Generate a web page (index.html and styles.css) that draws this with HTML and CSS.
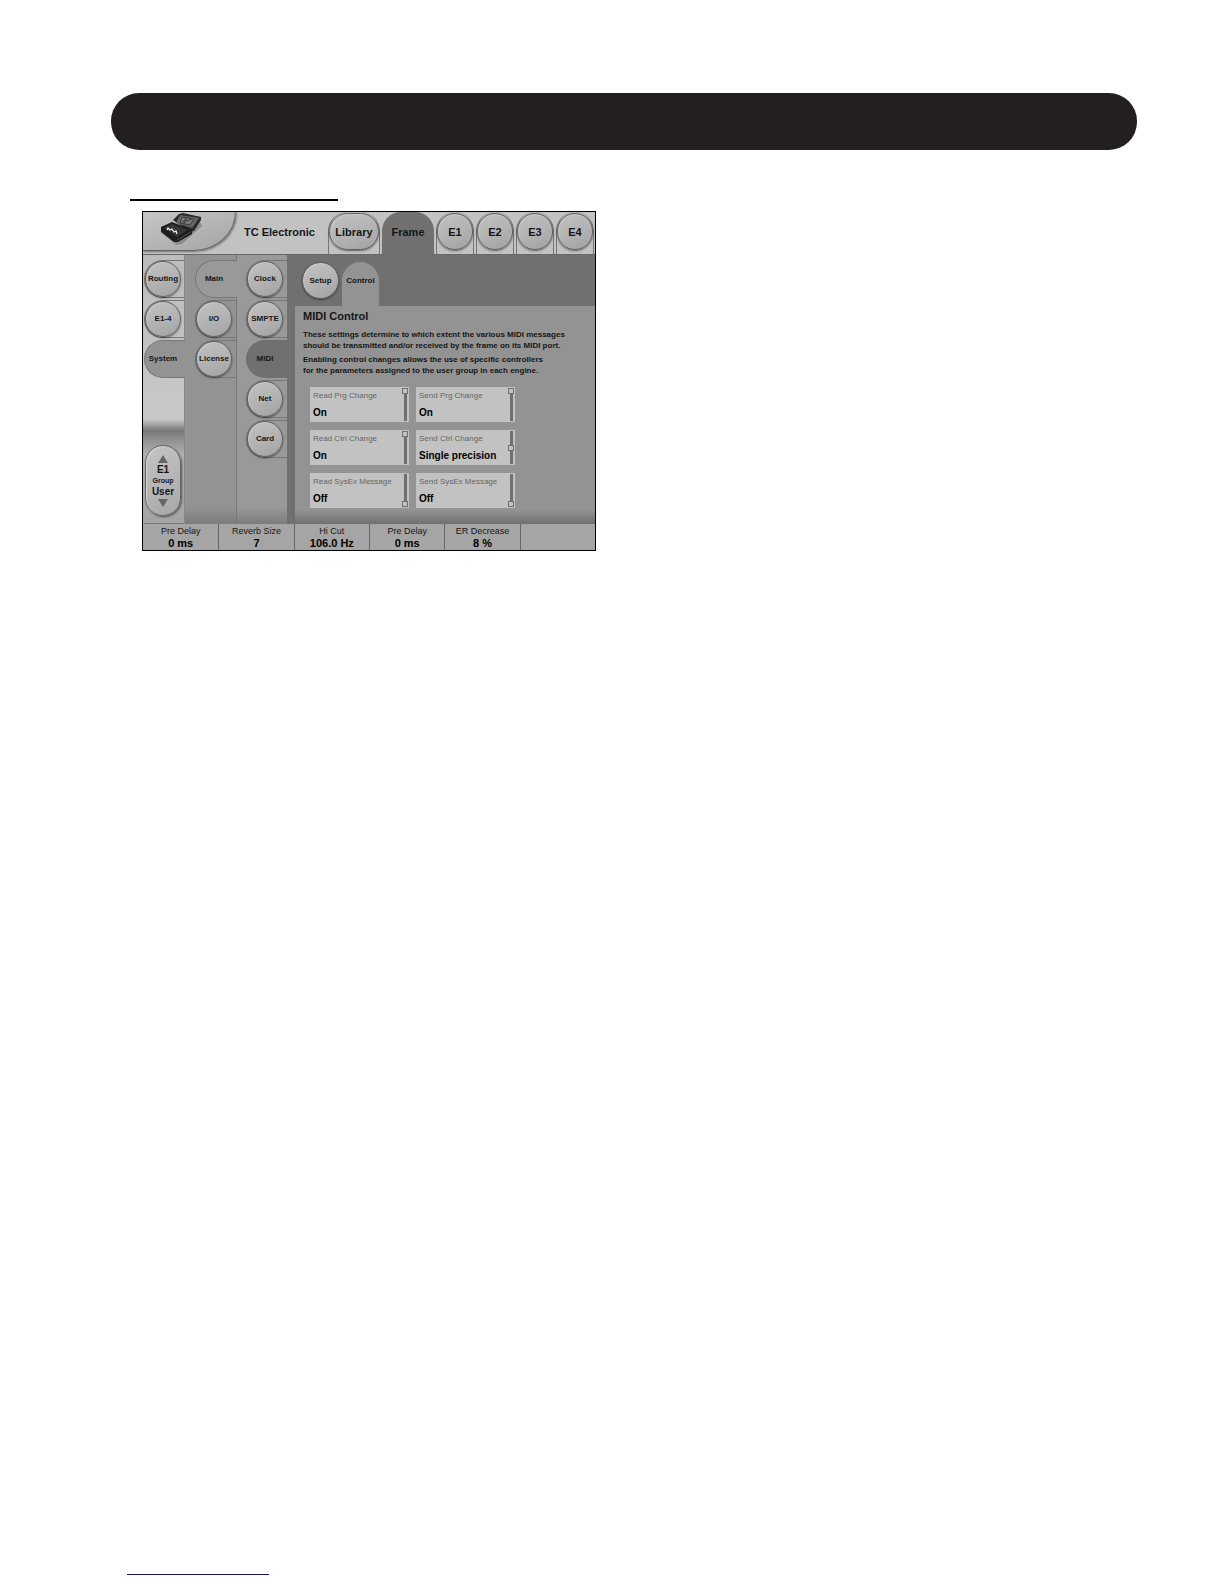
FILE: index.html
```
<!DOCTYPE html>
<html lang="en">
<head>
  <meta charset="UTF-8" />
  <meta name="viewport" content="width=device-width, initial-scale=1.0"/>
  <title>MIDI Control</title>
  <link rel="stylesheet" href="styles.css">
</head>
<body>
  <header class="banner"></header>

  <main class="page">
    <hr class="section-rule">

    <div class="device">
      <!-- Top bar -->
      <nav class="topbar">
        <div class="logo">
          <svg width="46" height="36" viewBox="0 0 46 36" aria-hidden="true">
            <path d="M1 20 L16 33 L22 32 L42 14 L40 10 L18 28 Z" fill="#666" opacity=".5"/>
            <path d="M13 8 L19 2 L23 1 L41 5 L41 8 L34 19 L30 20 Z" fill="#2a2a2a"/>
            <path d="M20 3 L39 6 L32 16 L16 11 Z" fill="#666"/>
            <path d="M22 5 L34 7 L30 13 L20 11 Z M26 5 L24 12 M32 7 L22 10" stroke="#3c3c3c" stroke-width="1" fill="#7a7a7a"/>
            <path d="M1 15 L12 10 L32 18 L32 22 L18 30 L14 30 L1 20 Z" fill="#1d1d1d"/>
            <path d="M4 16 L12 12 L28 18 L17 25 Z" fill="#353535"/>
            <path d="M7 18 L8 16 L10 18 L12 17 L14 20 L16 19 L17 22" stroke="#e8e8e8" stroke-width="1.3" fill="none"/>
            <path d="M17 28 L31 20" stroke="#555" stroke-width="1"/>
          </svg>
        </div>
        <h1 class="brand">TC Electronic</h1>
        <ul class="tabs">
          <li class="wide"><button class="knob">Library</button></li>
          <li class="wide active"><button>Frame</button></li>
          <li><button class="knob">E1</button></li>
          <li><button class="knob">E2</button></li>
          <li><button class="knob">E3</button></li>
          <li><button class="knob">E4</button></li>
        </ul>
      </nav>

      <div class="workspace">
        <div class="rail rail-first">
          <ul>
            <li><button class="knob">Routing</button></li>
            <li><button class="knob">E1-4</button></li>
            <li class="active"><button>System</button></li>
          </ul>
          <div class="group">
            <div class="group-pill">
              <button aria-label="Previous group"><svg width="10" height="8" viewBox="0 0 10 8"><path d="M5 0 L10 8 L0 8 Z" fill="#666"/></svg></button>
              <strong>E1</strong>
              <span>Group</span>
              <strong>User</strong>
              <button aria-label="Next group"><svg width="10" height="8" viewBox="0 0 10 8"><path d="M0 0 L10 0 L5 8 Z" fill="#666"/></svg></button>
            </div>
          </div>
        </div>

        <div class="rail rail-second">
          <ul>
            <li class="active"><button>Main</button></li>
            <li><button class="knob">I/O</button></li>
            <li><button class="knob">License</button></li>
          </ul>
        </div>

        <div class="rail rail-third">
          <ul>
            <li><button class="knob">Clock</button></li>
            <li><button class="knob">SMPTE</button></li>
            <li class="active"><button>MIDI</button></li>
            <li><button class="knob">Net</button></li>
            <li><button class="knob">Card</button></li>
          </ul>
        </div>

        <section class="panel">
          <div class="subtabs">
            <button class="knob">Setup</button>
            <button class="current">Control</button>
          </div>
          <div class="content">
            <h2>MIDI Control</h2>
            <p>These settings determine to which extent the various MIDI messages<br>should be transmitted and/or received by the frame on its MIDI port.</p>
            <p>Enabling control changes allows the use of specific controllers<br>for the parameters assigned to the user group in each engine.</p>

            <div class="params">
              <button class="param"><span>Read Prg Change</span><b>On</b><i class="slider"></i></button>
              <button class="param"><span>Send Prg Change</span><b>On</b><i class="slider"></i></button>
              <button class="param"><span>Read Ctrl Change</span><b>On</b><i class="slider"></i></button>
              <button class="param"><span>Send Ctrl Change</span><b>Single precision</b><i class="slider mid"></i></button>
              <button class="param"><span>Read SysEx Message</span><b>Off</b><i class="slider low"></i></button>
              <button class="param"><span>Send SysEx Message</span><b>Off</b><i class="slider low"></i></button>
            </div>
          </div>
        </section>
      </div>

      <!-- Fader assignments -->
      <dl class="faders">
        <div><dt>Pre Delay</dt><dd>0 ms</dd></div>
        <div><dt>Reverb Size</dt><dd>7</dd></div>
        <div><dt>Hi Cut</dt><dd>106.0 Hz</dd></div>
        <div><dt>Pre Delay</dt><dd>0 ms</dd></div>
        <div><dt>ER Decrease</dt><dd>8 %</dd></div>
        <div></div>
      </dl>
    </div>
  </main>

  <footer class="footer">
    <hr class="footer-rule">
  </footer>
</body>
</html>
```
FILE: styles.css
```
:root {
  --ink: #161616;
  --line: #686868;
  --light: #c2c2c2;
  --mid: #939393;
  --dark: #707070;
}
* {
  box-sizing: border-box;
  margin: 0;
  padding: 0;
}
body {
  display: flex;
  flex-direction: column;
  min-height: 100vh;
  background: #fff;
  color: var(--ink);
  font-family: "Liberation Sans", Arial, sans-serif;
}
ul {
  list-style: none;
}
button {
  background: none;
  border: none;
  color: inherit;
  font: bold 8px/10px "Liberation Sans", Arial, sans-serif;
  cursor: pointer;
}
svg {
  display: block;
}

.banner {
  height: 57px;
  margin: 93px 87px 0 111px;
  border-radius: 28px;
  background: #231f20;
}

.page {
  padding: 49px 87px 0 130px;
}

.section-rule {
  max-width: 208px;
  border: none;
  border-top: 2px solid #000;
}

.device {
  max-width: 454px;
  margin: 10px 0 0 12px;
  border: 1px solid #000;
  background: var(--mid);
}

.knob {
  width: 37px;
  height: 37px;
  border: 1px solid #606060;
  border-radius: 19px;
  background: linear-gradient(160deg, #c2c2c2, #b2b2b2 55%, #a2a2a2);
  box-shadow: 0 1px 2px rgba(0, 0, 0, 0.5), inset 1px 1px 1px #cacaca;
  white-space: nowrap;
}

/* Top bar */
.topbar {
  display: flex;
  height: 43px;
  background: var(--light);
  border-bottom: 1px solid var(--line);
}

.logo {
  width: 93px;
  height: 39px;
  padding-left: 17px;
  border: solid #666;
  border-width: 0 1px 1px 0;
  border-bottom-right-radius: 42px 39px;
  background: linear-gradient(160deg, #c6c6c6, #a4a4a4);
  box-shadow: 1px 1px 2px rgba(0, 0, 0, 0.4);
}

.brand {
  flex: 1;
  padding-left: 8px;
  font-size: 11px;
  line-height: 40px;
  white-space: nowrap;
}

.tabs {
  display: flex;
  gap: 2px;
  padding-right: 1px;
}

.tabs li {
  width: 38px;
  height: 42px;
  padding-top: 1px;
  border: solid #777;
  border-width: 0 1px;
  border-radius: 19px 19px 0 0;
}

.tabs li.wide {
  width: 52px;
}

.tabs button {
  width: 36px;
  height: 37px;
  font-size: 11px;
}

.tabs .wide button {
  width: 50px;
}

.tabs li.active {
  height: 43px;
  border-color: var(--dark);
  background: var(--dark);
}

/* Workspace */
.workspace {
  display: flex;
  min-height: 269px;
}

.rail {
  padding-top: 5px;
}

.rail li {
  height: 38px;
  margin-bottom: 2px;
  border: 1px solid #777;
  border-right: none;
  border-radius: 19px 0 0 19px;
}

.rail li button {
  width: 36px;
  height: 36px;
}

.rail-first {
  display: flex;
  flex-direction: column;
  justify-content: space-between;
  width: 42px;
  padding-left: 1px;
  border-right: 1px solid #888;
  background: linear-gradient(#bcbcbc, #c8c8c8 164px, #777 176px, #8a8a8a 182px, #b0b0b0 200px, #a4a4a4);
}

.rail-first .active {
  margin-right: -1px;
  background: var(--mid);
}

.rail-second {
  width: 52px;
  padding-left: 10px;
  border-right: 1px solid #777;
  background: linear-gradient(var(--mid) 252px, #7c7c7c);
}

.rail-second .active {
  margin-right: -1px;
  background: #999;
}

.rail-third {
  width: 50px;
  padding-left: 9px;
  background: linear-gradient(#999 252px, #7c7c7c);
}

.rail-third .active {
  border-color: var(--dark);
  background: var(--dark);
}

.group {
  padding: 0 3px 7px 1px;
  border-bottom: 1px solid #777;
}

.group-pill {
  display: flex;
  flex-direction: column;
  align-items: center;
  justify-content: center;
  height: 71px;
  border: 1px solid #666;
  border-radius: 18px;
  background: linear-gradient(150deg, #c4c4c4, #a8a8a8);
  box-shadow: 1px 1px 2px rgba(0, 0, 0, 0.5), inset 1px 1px 1px #d4d4d4;
}

.group-pill button {
  height: 8px;
  line-height: 0;
}

.group-pill strong {
  font-size: 10px;
  line-height: 14px;
}

.group-pill span {
  font-size: 7px;
  font-weight: bold;
  line-height: 8px;
}

/* Panel */
.panel {
  display: flex;
  flex: 1;
  flex-direction: column;
  padding-left: 8px;
  background: var(--dark);
}

.subtabs {
  display: flex;
  gap: 3px;
  padding: 7px 0 0 7px;
}

.subtabs .current {
  width: 37px;
  height: 44px;
  padding-bottom: 7px;
  border-radius: 19px 19px 0 0;
  background: var(--mid);
}

.content {
  flex: 1;
  padding: 0 8px;
  background: linear-gradient(var(--mid) 204px, #707070);
}

.content h2 {
  margin-bottom: 6px;
  padding-top: 3px;
  font-size: 11px;
  line-height: 14px;
}

.content p {
  margin-bottom: 3px;
  font-size: 8px;
  font-weight: bold;
  line-height: 11px;
  white-space: nowrap;
}

.params {
  display: grid;
  grid-template-columns: 99px 99px;
  gap: 8px 7px;
  padding: 8px 0 0 7px;
}

.param {
  display: grid;
  grid-template: 17px 18px / 1fr 6px;
  align-items: center;
  padding: 0 1px 0 3px;
  background: var(--light);
  text-align: left;
  white-space: nowrap;
}

.param span {
  color: #666;
  font-weight: normal;
}

.param b {
  color: #000;
  font-size: 10px;
}

.slider {
  display: flex;
  grid-area: 1 / 2 / 3 / 3;
  flex-direction: column;
  height: 33px;
  background: linear-gradient(90deg, transparent 2px, var(--dark) 2px, var(--dark) 5px, transparent 5px);
}

/* Slider handle */
.slider::before {
  content: "";
  height: 4px;
  border: 1px solid var(--dark);
  background: var(--light);
}

.slider.mid {
  justify-content: center;
}

.slider.low {
  justify-content: flex-end;
}

/* Faders */
.faders {
  display: grid;
  grid-template-columns: repeat(6, 1fr);
  min-height: 26px;
  background: #a5a5a5;
  text-align: center;
}

.faders div + div {
  border-left: 1px solid #666;
}

.faders dt {
  padding-top: 1px;
  font-size: 9px;
  line-height: 12px;
}

.faders dd {
  color: #000;
  font-size: 11px;
  font-weight: bold;
  line-height: 13px;
}

.footer {
  margin-top: auto;
  padding: 0 87px 9px 127px;
}

.footer-rule {
  max-width: 142px;
  border: none;
  border-top: 1px solid #1b1464;
}
```
